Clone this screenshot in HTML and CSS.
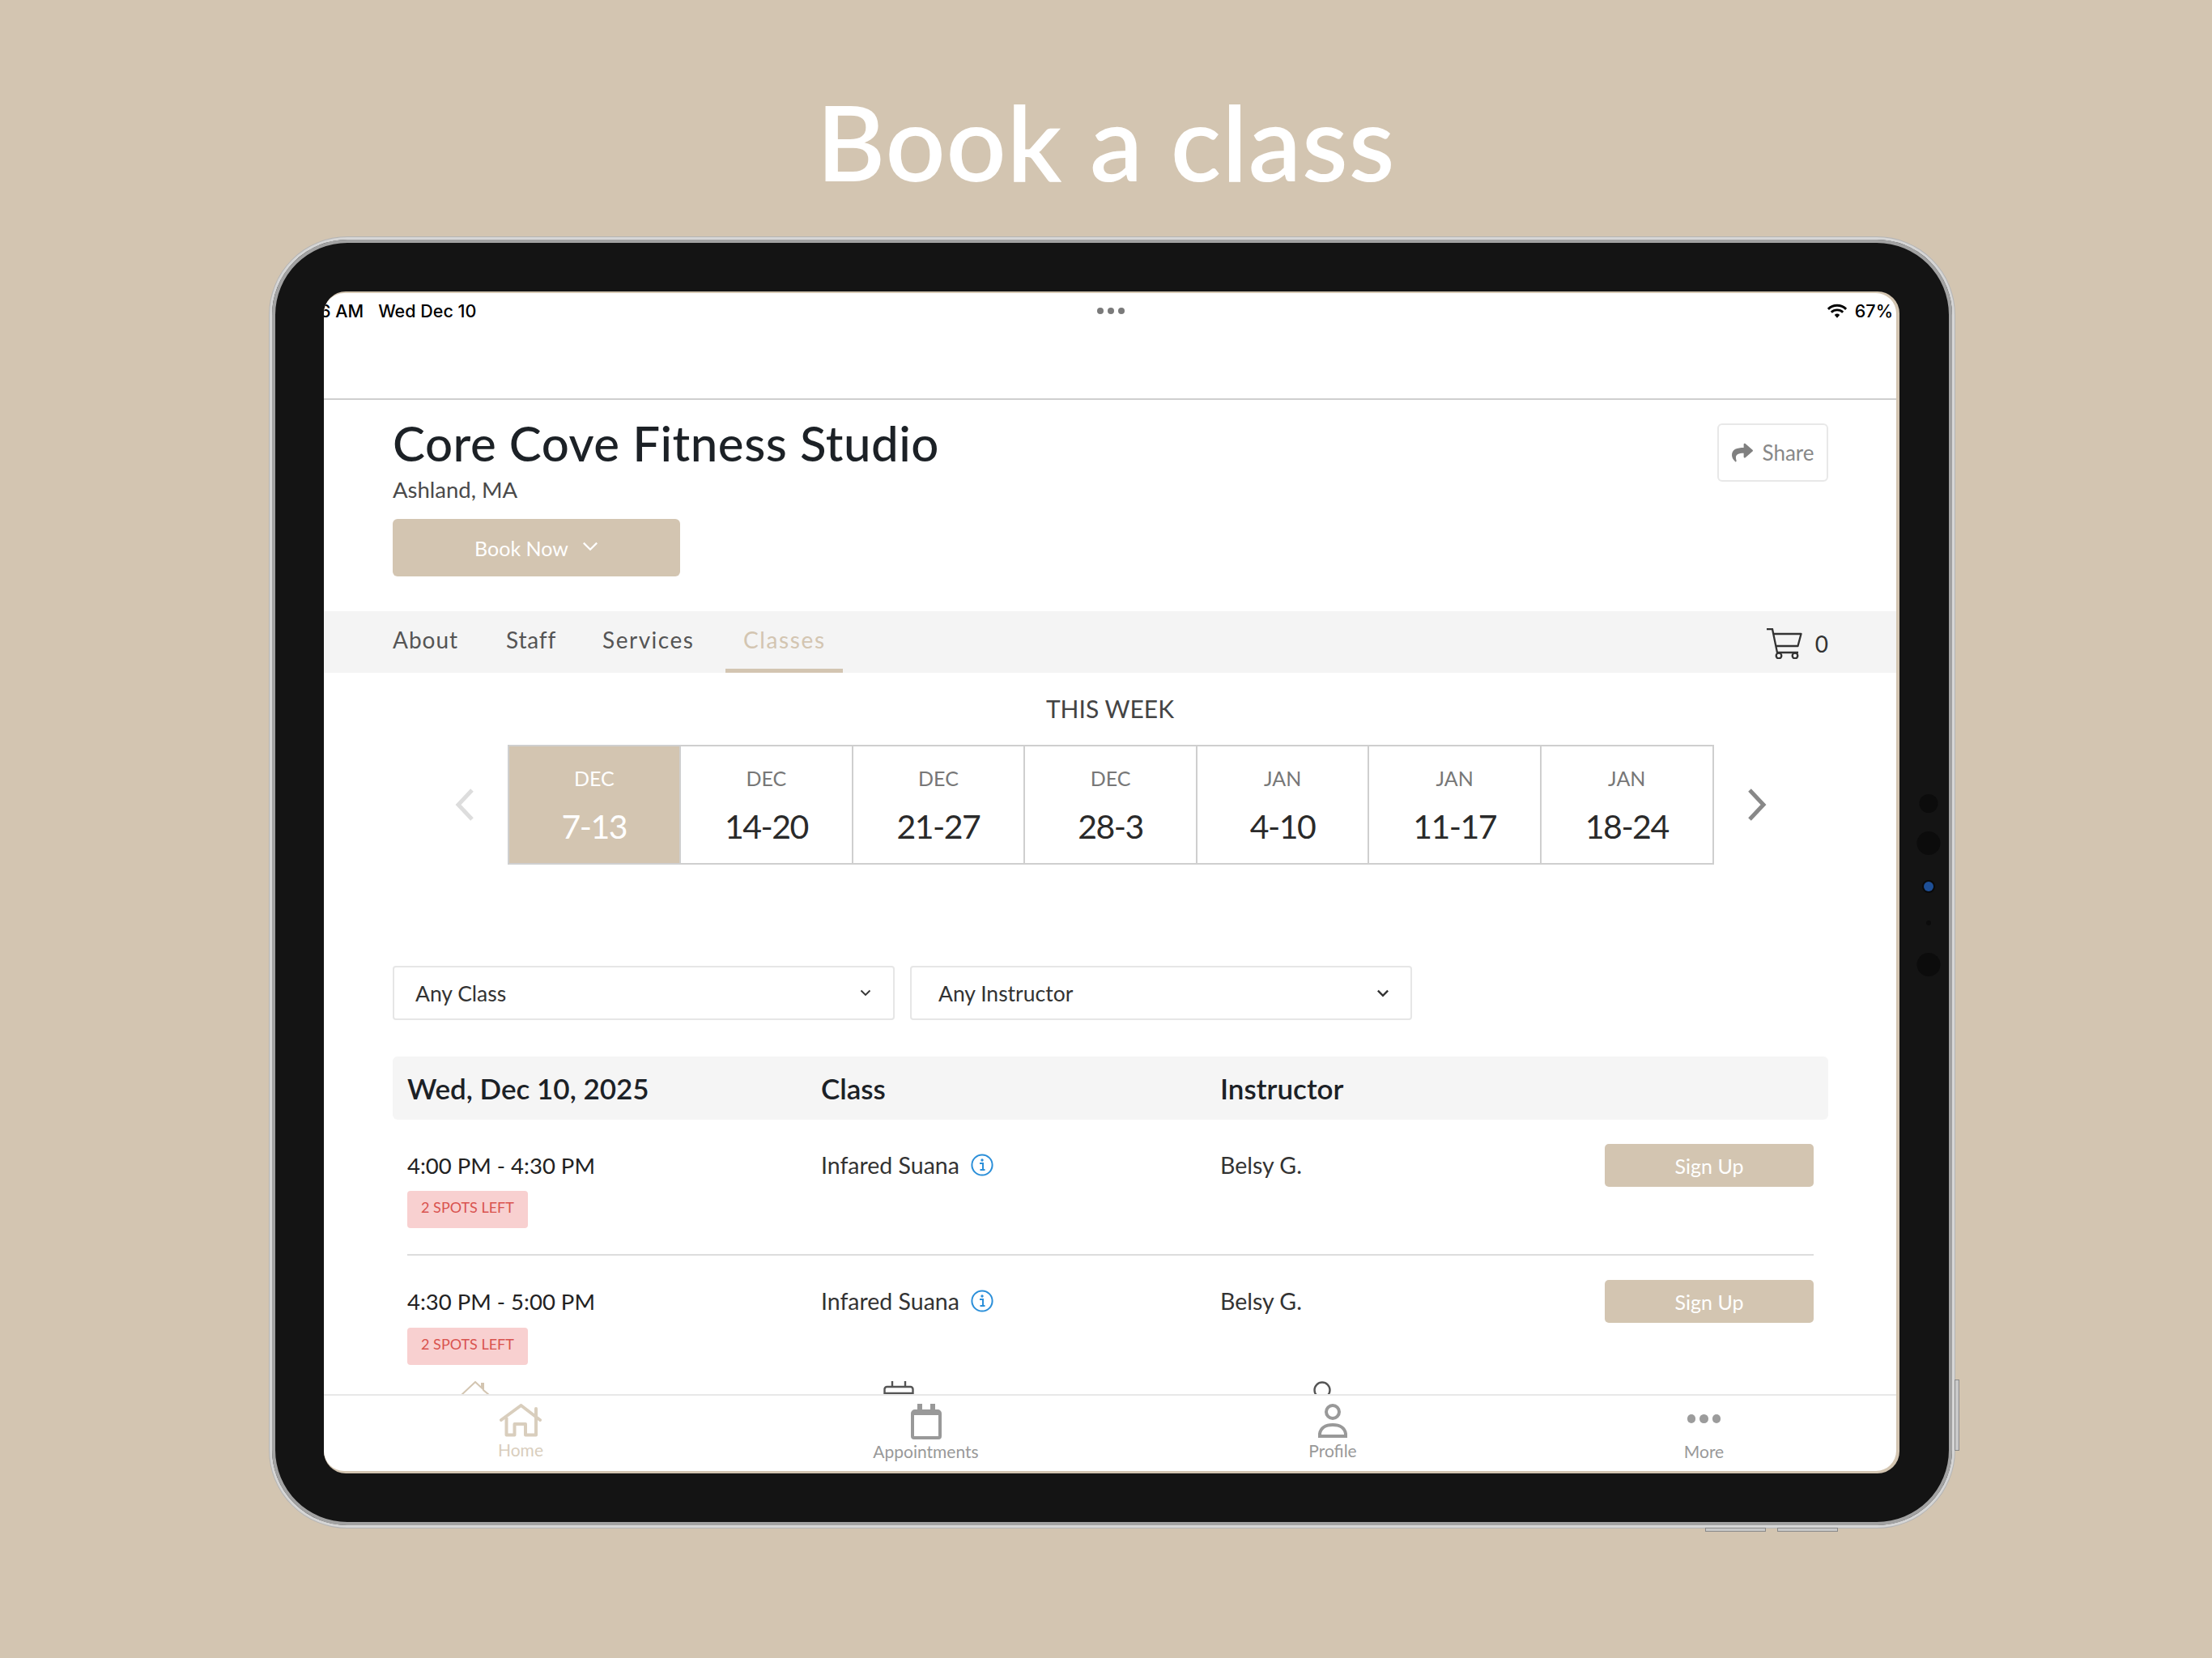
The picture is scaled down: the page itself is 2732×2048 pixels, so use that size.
FILE: index.html
```html
<!DOCTYPE html>
<html lang="en">
<head>
<meta charset="utf-8">
<title>Book a class</title>
<link rel="stylesheet" href="styles.css">
</head>
<body>
<div class="stage">
  <h1 class="headline">Book a class</h1>
  <div class="device">
    <span class="sensor s1"></span><span class="sensor s2"></span><span class="sensor cam"></span><span class="sensor s3"></span><span class="sensor s4"></span>
    <span class="hw side"></span><span class="hw bottom b1"></span><span class="hw bottom b2"></span>
    <div class="screen-edge">
      <div class="screen">
        <div class="main">
          <div class="topbar">
            <div class="status">
              <div class="status-left"><span class="clock">6 AM</span><span>Wed Dec 10</span></div>
              <div class="status-dots"><i></i><i></i><i></i></div>
              <div class="status-right">
                <svg class="wifi" viewBox="0 0 24 18"><path d="M1.500 6.500a15 15 0 0 1 21 0M5.200 10.200a9.800 9.800 0 0 1 13.600 0" fill="none" stroke="#000" stroke-width="2.800"/><path d="M8.900 13.200a4.600 4.600 0 0 1 6.200 0L12 16.800z" fill="#000"/></svg>
                <span>67%</span>
              </div>
            </div>
          </div>
          <header class="studio">
            <div class="studio-info">
              <h2 class="studio-name">Core Cove Fitness Studio</h2>
              <p class="studio-loc">Ashland, MA</p>
              <button class="book-now"><span>Book Now</span>
                <svg class="book-chev" viewBox="0 0 18 11"><path d="M1.500 1.500 9 9l7.500-7.500" fill="none" stroke="#fff" stroke-width="2"/></svg>
              </button>
            </div>
            <button class="share">
              <svg class="share-ico" viewBox="0 0 512 512"><path fill="#808080" d="M503.691 189.836L327.687 37.851C312.281 24.546 288 35.347 288 56.015v80.053C127.371 137.907 0 170.100 0 322.326c0 61.441 39.581 122.309 83.333 154.132 13.653 9.931 33.111-2.533 28.077-18.631C66.066 312.814 132.917 274.316 288 272.085V360c0 20.700 24.300 31.453 39.687 18.164l176.004-152c11.071-9.562 11.086-26.753 0-36.328z"/></svg>
              <span>Share</span>
            </button>
          </header>
          <nav class="tabs">
            <a class="tab t-about">About</a>
            <a class="tab t-staff">Staff</a>
            <a class="tab t-services">Services</a>
            <a class="tab active">Classes</a>
            <div class="cart">
              <svg class="cart-ico" viewBox="0 0 44 38"><path d="M0 1h7l6 29h26M9 7h33.500l-4 15H12" fill="none" stroke="#333" stroke-width="2.300" stroke-linejoin="round"/><circle cx="15" cy="34" r="3.300" fill="none" stroke="#333" stroke-width="2.300"/><circle cx="35" cy="34" r="3.300" fill="none" stroke="#333" stroke-width="2.300"/></svg>
              <span>0</span>
            </div>
          </nav>
          <h3 class="week-title">THIS WEEK</h3>
          <div class="weeks">
            <svg class="arrow" viewBox="0 0 26 42"><path d="M22 3 5 21l17 18" fill="none" stroke="#ddd" stroke-width="5"/></svg>
            <div class="week-row">
              <div class="week on"><span class="mon">DEC</span><span class="range">7-13</span></div>
              <div class="week"><span class="mon">DEC</span><span class="range">14-20</span></div>
              <div class="week"><span class="mon">DEC</span><span class="range">21-27</span></div>
              <div class="week"><span class="mon">DEC</span><span class="range">28-3</span></div>
              <div class="week"><span class="mon">JAN</span><span class="range">4-10</span></div>
              <div class="week"><span class="mon">JAN</span><span class="range">11-17</span></div>
              <div class="week"><span class="mon">JAN</span><span class="range">18-24</span></div>
            </div>
            <svg class="arrow" viewBox="0 0 26 42"><path d="M4 3l17 18L4 39" fill="none" stroke="#888" stroke-width="5"/></svg>
          </div>
          <div class="filters">
            <div class="select s-class"><span>Any Class</span><svg class="sel-chev" viewBox="0 0 14 9"><path d="M1.500 1.500 7 7l5.500-5.500" fill="none" stroke="#333" stroke-width="1.800"/></svg></div>
            <div class="select s-inst"><span>Any Instructor</span><svg class="sel-chev wide" viewBox="0 0 14 9"><path d="M1.500 1.500 7 7l5.500-5.500" fill="none" stroke="#333" stroke-width="2.200"/></svg></div>
          </div>
          <div class="table">
            <div class="thead"><span>Wed, Dec 10, 2025</span><span>Class</span><span>Instructor</span></div>
            <div class="row">
              <div class="when"><div class="time">4:00 PM - 4:30 PM</div><div class="badge">2 SPOTS LEFT</div></div>
              <div class="cls"><span>Infared Suana</span><svg class="info" viewBox="0 0 28 28"><circle cx="14" cy="14" r="12.600" fill="none" stroke="#2b8fd9" stroke-width="2"/><path d="M11 12h4v8h2M11.500 20h6" fill="none" stroke="#2b8fd9" stroke-width="2"/><circle cx="14" cy="8" r="1.700" fill="#2b8fd9"/></svg></div>
              <div class="inst">Belsy G.</div>
              <button class="signup">Sign Up</button>
            </div>
            <div class="row">
              <div class="when"><div class="time">4:30 PM - 5:00 PM</div><div class="badge">2 SPOTS LEFT</div></div>
              <div class="cls"><span>Infared Suana</span><svg class="info" viewBox="0 0 28 28"><circle cx="14" cy="14" r="12.600" fill="none" stroke="#2b8fd9" stroke-width="2"/><path d="M11 12h4v8h2M11.500 20h6" fill="none" stroke="#2b8fd9" stroke-width="2"/><circle cx="14" cy="8" r="1.700" fill="#2b8fd9"/></svg></div>
              <div class="inst">Belsy G.</div>
              <button class="signup">Sign Up</button>
            </div>
          </div>
          <div class="peek">
            <svg class="peek-home" viewBox="0 0 36 36"><path d="M1 17 18 1l8 7.500V3h2v8l7 6" fill="none" stroke="#d3c5b1" stroke-width="2"/></svg>
            <svg class="peek-cal" viewBox="0 0 38 36"><path d="M11 0v8M27 0v8" stroke="#555" stroke-width="2.400"/><rect x="1.500" y="7" width="35" height="27" rx="3" fill="none" stroke="#555" stroke-width="2.400"/><path d="M1.500 15h35" stroke="#555" stroke-width="2.400"/></svg>
            <svg class="peek-user" viewBox="0 0 22 36"><circle cx="11" cy="11" r="9.500" fill="none" stroke="#555" stroke-width="2.400"/></svg>
          </div>
        </div>
        <footer class="tabbar">
          <div class="tb-item tb-home">
            <svg class="tb-ico ico-home" viewBox="0 0 52 41"><path d="M2 20 26.500 2 50 20M45 6v12" fill="none" stroke="#d9cebd" stroke-width="4" stroke-linecap="round" stroke-linejoin="round"/><path d="M8.500 17v21.500h10V25h13.500v13.500h13V17" fill="none" stroke="#d9cebd" stroke-width="4" stroke-linejoin="round"/></svg>
            <span>Home</span>
          </div>
          <div class="tb-item">
            <svg class="tb-ico ico-cal" viewBox="0 0 38 44"><path d="M4 44a4 4 0 0 1-4-4V12a5 5 0 0 1 5-5h3V0h6v7h10V0h6v7h3a5 5 0 0 1 5 5v28a4 4 0 0 1-4 4z" fill="#999"/><rect x="4" y="14" width="30" height="26" fill="#fff"/></svg>
            <span>Appointments</span>
          </div>
          <div class="tb-item">
            <svg class="tb-ico ico-user" viewBox="0 0 36 42"><circle cx="18" cy="10" r="8" fill="none" stroke="#999" stroke-width="4"/><path d="M2 40v-3C3 30 9 26 18 26s15 4 16 11v3z" fill="none" stroke="#999" stroke-width="4"/></svg>
            <span>Profile</span>
          </div>
          <div class="tb-item tb-more">
            <div class="dots"><i></i><i></i><i></i></div>
            <span>More</span>
          </div>
        </footer>
      </div>
    </div>
  </div>
</div>
</body>
</html>
```
FILE: styles.css
```css
* { box-sizing: border-box; }
html, body { margin: 0; padding: 0; }
body { font-family: "Lato", "Liberation Sans", sans-serif; color: #222; }
button { font-family: inherit; cursor: pointer; }
h1, h2, h3, p { margin: 0; font-weight: 400; }

.stage { width: 2732px; height: 2048px; background: #d3c5b1; overflow: hidden; padding-top: 293px; position: relative; }
.headline { position: absolute; left: 0; right: 0; top: 94px; text-align: center; font-size: 130px; letter-spacing: 1px; line-height: 160px; font-weight: 600; color: #fff; }

.device { position: relative; margin-left: 333px; width: 2081px; height: 1594px; border-radius: 96px; background: #141414; border: 3px solid #d6d6d6; box-shadow: inset 0 0 0 4px #a2a2a2, 0 0 0 1px #b5b5b5; padding: 64px 65px 0 64px; }
.sensor { position: absolute; border-radius: 50%; background: #0c0c0c; left: 2046px; transform: translateX(-50%); }
.s1 { top: 685px; width: 23px; height: 23px; }
.s2 { top: 731px; width: 29px; height: 29px; }
.cam { top: 793px; width: 12px; height: 12px; background: #1e4f96; box-shadow: 0 0 0 2px #0a0a0a; }
.s3 { top: 841px; width: 6px; height: 6px; }
.s4 { top: 881px; width: 29px; height: 29px; }
.hw { position: absolute; background: #c9c9c9; border: 1px solid #8a8a8a; }
.side { left: 2078px; top: 1408px; width: 6px; height: 88px; }
.bottom { top: 1591px; height: 5px; width: 75px; }
.b1 { left: 1770px; }
.b2 { left: 1859px; }

.screen-edge { background: #d3c5b1; width: 1946px; height: 1460px; padding: 2px 4px 3px 0; border-radius: 27px; }
.screen { background: #fff; width: 1942px; height: 1455px; border-radius: 25px; display: flex; flex-direction: column; overflow: hidden; }
.main { flex: 1; min-height: 0; overflow: hidden; }

.topbar { height: 132px; border-bottom: 2px solid #cfcfcf; }
.status { display: flex; justify-content: space-between; align-items: center; height: 44px; font-family: "Inter", sans-serif; font-weight: 500; font-size: 21.5px; color: #000; padding-right: 4px; }
.status-left { display: flex; gap: 18px; width: 611px; margin-left: -5px; }
.status-dots { display: flex; gap: 5px; }
.status-dots i { width: 8px; height: 8px; border-radius: 50%; background: #7a7a7a; }
.status-right { display: flex; align-items: center; justify-content: flex-end; gap: 9px; width: 600px; }
.wifi { width: 26px; height: 19px; }

.studio { display: flex; justify-content: space-between; align-items: flex-start; padding: 19px 84px 0 85px; height: 261px; }
.studio-name { font-size: 60px; letter-spacing: 0.5px; line-height: 68px; font-weight: 500; color: #1c2126; }
.studio-loc { font-size: 27.5px; line-height: 36px; color: #4a4a4a; margin-top: 6px; }
.book-now { margin-top: 18px; width: 355px; height: 71px; border: 0; border-radius: 6px; background: #d3c5b1; color: #fff; font-size: 25px; display: flex; align-items: center; justify-content: center; gap: 17px; }
.book-chev { width: 20px; height: 12px; margin-top: -4px; }
.share { margin-top: 10px; width: 137px; height: 72px; background: #fff; border: 2px solid #e8e8e8; border-radius: 6px; display: flex; align-items: center; justify-content: center; gap: 12px; color: #888; font-size: 26px; padding: 0; }
.share-ico { width: 26px; height: 26px; }

.tabs { height: 76px; background: #f4f4f4; display: flex; padding: 0 84px 0 85px; align-items: stretch; }
.tab { font-size: 28px; letter-spacing: 1px; color: #555; line-height: 70px; }
.t-about { margin-right: 59px; }
.t-staff { margin-right: 57px; letter-spacing: 0.8px; }
.t-services { margin-right: 39px; letter-spacing: 1.5px; }
.tab.active { color: #d3c5b1; width: 145px; text-align: center; letter-spacing: 1.6px; border-bottom: 5px solid #d3c5b1; height: 76px; }
.cart { margin-left: auto; display: flex; align-items: center; gap: 16px; font-size: 28px; color: #333; padding-top: 4px; }
.cart-ico { width: 44px; height: 38px; }

.week-title { text-align: center; font-size: 30px; line-height: 40px; color: #444; padding-top: 24px; height: 89px; }
.weeks { display: flex; justify-content: center; align-items: center; gap: 40px; padding-left: 1px; }
.arrow { width: 26px; height: 42px; }
.week-row { display: flex; border: 2px solid #cfcfcf; height: 148px; width: 1490px; }
.week { flex: 1; border-left: 2px solid #cfcfcf; display: flex; flex-direction: column; align-items: center; padding-top: 24px; }
.week:first-child { border-left: 0; }
.week.on { background: #d3c5b1; }
.mon { font-size: 25px; line-height: 30px; color: #777; }
.range { font-size: 41px; letter-spacing: -1.5px; line-height: 60px; color: #2a2a2a; margin-top: 15px; }
.week.on .mon, .week.on .range { color: #fff; }

.filters { display: flex; gap: 19px; padding: 125px 85px 0; }
.select { height: 67px; border: 2px solid #e6e6e6; border-radius: 4px; display: flex; align-items: center; justify-content: space-between; font-size: 26.5px; color: #333; }
.s-class { width: 620px; padding: 0 27px 0 26px; }
.s-inst { width: 620px; padding: 0 26px 0 33px; }
.sel-chev { width: 14px; height: 9px; }
.sel-chev.wide { width: 16px; height: 10px; }

.table { padding: 45px 84px 0 85px; }
.thead { display: grid; grid-template-columns: 511px 493px 1fr; height: 78px; background: #f5f5f5; border-radius: 6px; padding: 0 18px; align-items: center; font-size: 35px; font-weight: 600; color: #1c2126; }
.row { display: grid; grid-template-columns: 511px 493px 1fr auto; margin: 0 18px; padding: 28px 0 32px; border-bottom: 2px solid #ddd; align-items: start; }
.row:last-child { border-bottom: 0; padding-bottom: 0; }
.row:last-child .badge { margin-top: 12px; }
.when { padding-top: 9px; }
.time { font-size: 27.5px; line-height: 40px; color: #222; }
.badge { margin-top: 11px; width: 149px; height: 46px; background: #f8d0d0; border-radius: 4px; color: #d9534f; font-size: 18px; line-height: 40px; text-align: center; }
.cls { display: flex; align-items: center; gap: 14px; height: 54px; font-size: 28.5px; color: #333; padding-top: 2px; }
.inst { height: 54px; line-height: 56px; font-size: 28.5px; color: #333; }
.info { width: 28px; height: 28px; }
.signup { margin-top: 2px; width: 258px; height: 53px; border: 0; border-radius: 5px; background: #d3c5b1; color: #fff; font-size: 25px; }

.peek { display: flex; align-items: flex-start; padding: 20px 0 0 169px; }
.peek-home { width: 36px; height: 36px; }
.peek-cal { width: 38px; height: 36px; margin-left: 486px; }
.peek-user { width: 22px; height: 36px; margin-left: 493px; }

.tabbar { height: 95px; flex: none; border-top: 2px solid #e8e8e8; display: grid; grid-template-columns: 486px 515px 490px 427px; }
.tb-item { display: flex; flex-direction: column; align-items: center; font-size: 21px; line-height: 26px; color: #999; padding-top: 10px; }
.tb-home { color: #d9cebd; }
.tb-ico { display: block; margin-bottom: 2px; }
.ico-home { width: 52px; height: 41px; margin-bottom: 3px; }
.ico-cal { width: 38px; height: 44px; }
.ico-user { width: 36px; height: 42px; margin-bottom: 3px; }
.dots { display: flex; gap: 5px; height: 44px; padding-top: 13px; margin-bottom: 2px; }
.dots i { width: 10.500px; height: 10.500px; border-radius: 50%; background: #9c9c9c; }
```
